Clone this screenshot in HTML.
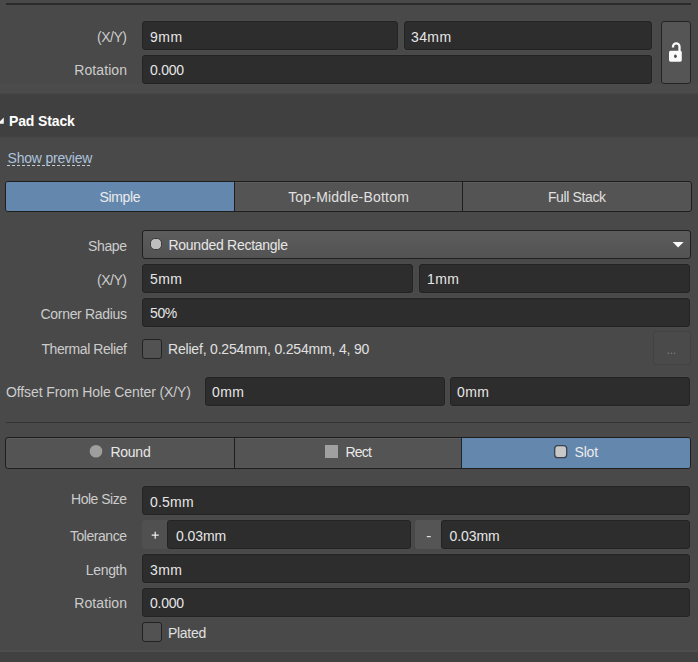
<!DOCTYPE html>
<html><head><meta charset="utf-8">
<style>
*{box-sizing:border-box;margin:0;padding:0}
html,body{width:698px;height:662px;overflow:hidden;background:#494949;font-family:"Liberation Sans",sans-serif;font-size:14px;line-height:16px}
.t{position:absolute;white-space:nowrap}
.a{position:absolute}
.fld{position:absolute;background:#2d2d2d;border:1px solid #232323;border-radius:3px;box-shadow:0 0 0 1px rgba(80,80,80,.3)}
.seg{position:absolute;border:1px solid #1e1e1e;border-radius:3px;background:#545454;overflow:hidden;box-shadow:inset 0 1px 0 #5c5c5c,inset 0 -1px 0 #585858}
.seg>div{position:absolute;top:0;bottom:0}
</style></head><body>
<div class="a" style="left:6px;top:3px;width:685px;height:2px;background:#2b2b2b"></div>
<div class="a" style="left:0px;top:84px;width:698px;height:9px;background:#4b4b4b"></div>
<div class="a" style="left:0px;top:93px;width:698px;height:45px;background:linear-gradient(#484848 0,#404040 2px,#404040 43px,#494949 45px)"></div>
<div class="a" style="left:0px;top:650px;width:698px;height:12px;background:linear-gradient(#4d4d4d 0,#4d4d4d 2px,#414141 2px)"></div>
<div class="fld" style="left:142px;top:21px;width:256px;height:29px;"></div>
<div class="fld" style="left:404px;top:21px;width:248px;height:29px;"></div>
<div class="t" style="top:28.95px;right:571.45px;text-align:right;color:#cccccc;letter-spacing:-0.45px;">(X/Y)</div>
<div class="t" style="top:28.75px;left:150px;color:#e6e6e6;letter-spacing:0.5px;">9mm</div>
<div class="t" style="top:28.75px;left:411px;color:#e6e6e6;letter-spacing:0.4px;">34mm</div>
<div class="fld" style="left:142px;top:55px;width:510px;height:29px;"></div>
<div class="t" style="top:61.95px;right:570.92px;text-align:right;color:#cccccc;letter-spacing:0.08px;">Rotation</div>
<div class="t" style="top:61.95px;left:150px;color:#e6e6e6;letter-spacing:-0.25px;">0.000</div>
<div class="a" style="left:661px;top:21px;width:30px;height:63px;background:#555;border:1px solid #242424;border-radius:3px"></div>
<div class="t" style="top:112.75px;left:9px;color:#ffffff;letter-spacing:-0.13px;font-weight:bold;">Pad Stack</div>
<div class="t" style="top:150.15px;left:7.5px;color:#adc3dd;letter-spacing:-0.2px;">Show preview</div>
<div class="a" style="left:7px;top:165px;width:85px;height:1px;background:repeating-linear-gradient(90deg,#c0cad6 0 3px,transparent 3px 5px)"></div>
<div class="seg" style="left:5px;top:181px;width:687px;height:31px"><div style="left:0;width:228px;background:#6487ad"></div><div style="left:228px;width:1px;background:#1e1e1e"></div><div style="left:456px;width:1px;background:#1e1e1e"></div></div>
<div class="t" style="top:188.75px;left:-30.18px;width:300px;text-align:center;color:#ececec;letter-spacing:-0.36px;">Simple</div>
<div class="t" style="top:188.75px;left:198.60px;width:300px;text-align:center;color:#e0e0e0;letter-spacing:0.2px;">Top-Middle-Bottom</div>
<div class="t" style="top:188.75px;left:426.81px;width:300px;text-align:center;color:#e0e0e0;letter-spacing:-0.38px;">Full Stack</div>
<div class="a" style="left:142px;top:230px;width:549px;height:29px;background:linear-gradient(#5c5c5c,#535353);border:1px solid #1f1f1f;border-radius:3px"></div>
<div class="t" style="top:237.75px;right:571.37px;text-align:right;color:#cccccc;letter-spacing:-0.37px;">Shape</div>
<div class="t" style="top:237.45px;left:168.5px;color:#e6e6e6;letter-spacing:-0.27px;">Rounded Rectangle</div>
<div class="fld" style="left:142px;top:264px;width:271px;height:29px;"></div>
<div class="fld" style="left:419px;top:264px;width:271px;height:29px;"></div>
<div class="t" style="top:271.75px;right:571.45px;text-align:right;color:#cccccc;letter-spacing:-0.45px;">(X/Y)</div>
<div class="t" style="top:271.45px;left:150px;color:#e6e6e6;letter-spacing:0.4px;">5mm</div>
<div class="t" style="top:271.45px;left:427px;color:#e6e6e6;letter-spacing:0.4px;">1mm</div>
<div class="fld" style="left:142px;top:298px;width:548px;height:29px;"></div>
<div class="t" style="top:306.45px;right:571.32px;text-align:right;color:#cccccc;letter-spacing:-0.32px;">Corner Radius</div>
<div class="t" style="top:305.45px;left:150px;color:#e6e6e6;letter-spacing:-0.35px;">50%</div>
<div class="a" style="left:142px;top:339px;width:20px;height:20px;background:#525252;border:1px solid #222;border-radius:3px"></div>
<div class="t" style="top:341.45px;right:571.42px;text-align:right;color:#cccccc;letter-spacing:-0.42px;">Thermal Relief</div>
<div class="t" style="top:341.45px;left:168px;color:#e0e0e0;letter-spacing:-0.19px;">Relief, 0.254mm, 0.254mm, 4, 90</div>
<div class="a" style="left:653px;top:331px;width:38px;height:34px;border:1px solid #434343;background:#4a4a4a;border-radius:3px"></div>
<div class="t" style="top:384.15px;left:6px;color:#cccccc;letter-spacing:-0.11px;">Offset From Hole Center (X/Y)</div>
<div class="fld" style="left:205px;top:377px;width:240px;height:29px;"></div>
<div class="fld" style="left:450px;top:377px;width:240px;height:29px;"></div>
<div class="t" style="top:384.15px;left:212px;color:#e6e6e6;letter-spacing:0.4px;">0mm</div>
<div class="t" style="top:384.15px;left:457px;color:#e6e6e6;letter-spacing:0.4px;">0mm</div>
<div class="a" style="left:6px;top:422px;width:685px;height:1px;background:#343434"></div>
<div class="seg" style="left:5px;top:437px;width:686px;height:32px"><div style="left:228px;width:1px;background:#1e1e1e"></div><div style="left:456px;right:0;background:#6487ad"></div><div style="left:455px;width:1px;background:#1c2530"></div></div>
<div class="t" style="top:444.15px;left:110.5px;color:#e8e8e8;letter-spacing:-0.27px;">Round</div>
<div class="t" style="top:444.15px;left:345.6px;color:#e8e8e8;letter-spacing:-0.85px;">Rect</div>
<div class="t" style="top:444.15px;left:574.6px;color:#ececec;letter-spacing:-0.23px;">Slot</div>
<div class="fld" style="left:142px;top:486px;width:548px;height:29px;"></div>
<div class="t" style="top:490.65px;right:571.50px;text-align:right;color:#cccccc;letter-spacing:-0.5px;">Hole Size</div>
<div class="t" style="top:493.65px;left:150px;color:#e6e6e6;letter-spacing:0.2px;">0.5mm</div>
<div class="a" style="left:142px;top:520px;width:25px;height:29px;background:#505050;border-radius:3px 0 0 3px"></div>
<div class="fld" style="left:167px;top:520px;width:244px;height:29px;"></div>
<div class="a" style="left:415px;top:520px;width:26px;height:29px;background:#555;border-radius:3px 0 0 3px"></div>
<div class="fld" style="left:441px;top:520px;width:249px;height:29px;"></div>
<div class="t" style="top:527.65px;right:571.45px;text-align:right;color:#cccccc;letter-spacing:-0.45px;">Tolerance</div>
<div class="t" style="top:527.65px;left:176px;color:#e6e6e6;letter-spacing:-0.08px;">0.03mm</div>
<div class="t" style="top:527.65px;left:449.5px;color:#e6e6e6;letter-spacing:-0.08px;">0.03mm</div>
<div class="fld" style="left:142px;top:554px;width:548px;height:29px;"></div>
<div class="t" style="top:561.55px;right:571.30px;text-align:right;color:#cccccc;letter-spacing:-0.3px;">Length</div>
<div class="t" style="top:561.55px;left:150px;color:#e6e6e6;letter-spacing:0.4px;">3mm</div>
<div class="fld" style="left:142px;top:588px;width:548px;height:29px;"></div>
<div class="t" style="top:595.35px;right:570.92px;text-align:right;color:#cccccc;letter-spacing:0.08px;">Rotation</div>
<div class="t" style="top:595.45px;left:150px;color:#e6e6e6;letter-spacing:-0.25px;">0.000</div>
<div class="a" style="left:142px;top:622px;width:20px;height:20px;background:#525252;border:1px solid #222;border-radius:3px"></div>
<div class="t" style="top:625.35px;left:168px;color:#e0e0e0;letter-spacing:-0.3px;">Plated</div>
<svg class="a" style="left:0;top:0" width="698" height="662" viewBox="0 0 698 662">
<polygon points="3.8,117.4 3.8,123.7 -2.5,123.7" fill="#f4f4f4"/>
<path d="M673 47.5 V46.6 A3.25 3.25 0 0 1 679.5 46.6 V51" fill="none" stroke="#fafafa" stroke-width="2.3"/>
<rect x="669" y="50.7" width="12.8" height="11" rx="1.6" fill="#fafafa"/>
<ellipse cx="675.4" cy="56.3" rx="1.4" ry="1.8" fill="#4d4d4d"/>
<polygon points="672.7,242.1 683.6,242.1 678.1,247.4" fill="#fafafa"/>
<rect x="150.5" y="238.5" width="11" height="11" rx="4.3" fill="#bebebe" stroke="#383838" stroke-width="1"/>
<circle cx="96" cy="451.2" r="6.3" fill="#9e9e9e"/>
<rect x="325" y="445" width="13" height="13" fill="#a0a0a0"/>
<rect x="554.7" y="445.7" width="12" height="12" rx="3" fill="#c8c8c8" stroke="#3a4250" stroke-width="1.3"/>
<path d="M151.7 535.2 H158.7 M155.2 531.7 V538.7" stroke="#f0f0f0" stroke-width="1.2"/>
<path d="M426.8 536.6 H430.8" stroke="#e0e0e0" stroke-width="1.2"/>
<circle cx="668.3" cy="353.2" r="0.8" fill="#7c7c7c"/><circle cx="671.4" cy="353.2" r="0.8" fill="#7c7c7c"/><circle cx="674.5" cy="353.2" r="0.8" fill="#7c7c7c"/>
</svg>
</body></html>
